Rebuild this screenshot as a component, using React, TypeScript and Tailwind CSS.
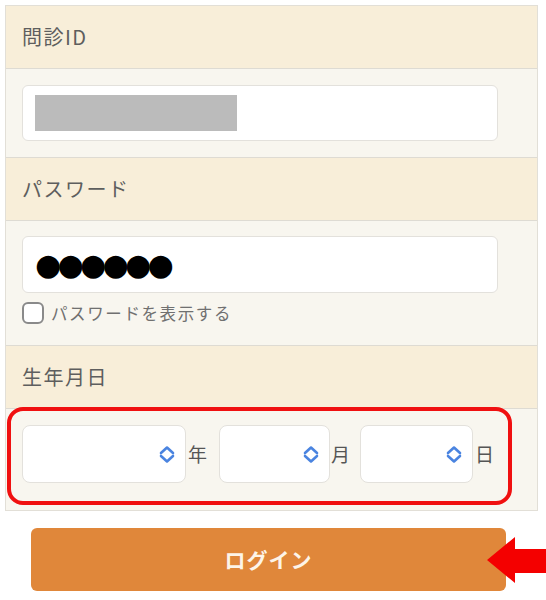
import React from "react";

const font = { fontFamily: '"Noto Sans CJK JP", "Noto Sans", sans-serif' };

function Chevrons() {
  return (
    <svg width="16" height="19" viewBox="0 0 16 19" fill="none">
      <path d="M2 8 L8 2.5 L14 8" stroke="#4a84e0" strokeWidth="2.6" strokeLinecap="round" strokeLinejoin="round" />
      <path d="M2 11 L8 16.5 L14 11" stroke="#4a84e0" strokeWidth="2.6" strokeLinecap="round" strokeLinejoin="round" />
    </svg>
  );
}

function Select({ w }: { w: string }) {
  return (
    <div className={`${w} h-[58px] bg-white border border-[#e3e1dc] rounded-[8px] flex items-center justify-end pr-[10px]`}>
      <Chevrons />
    </div>
  );
}

function Header({ children }: { children: React.ReactNode }) {
  return (
    <div className="h-[63px] bg-[#f8eed9] flex items-center pl-[16px] text-[20px] tracking-[1.5px] text-[#5e5e5e] border-b border-[#dedbd3]">
      {children}
    </div>
  );
}

export default function App() {
  return (
    <div className="relative w-[546px] h-[600px] bg-white overflow-hidden" style={font}>
      <div className="pt-[5px] pl-[5px]">
        <div className="relative w-[533px] border border-[#e2dfd7] bg-[#f8f6ef]">
          <Header>問診ID</Header>
          <div className="pt-[16px] pb-[16px] pl-[16px] border-b border-[#dedbd3]">
            <div className="w-[476px] h-[56px] bg-white border border-[#e3e1dc] rounded-[6px] flex items-center pl-[12px]">
              <div className="w-[202px] h-[36px] bg-[#bbbbbb]" />
            </div>
          </div>
          <Header>パスワード</Header>
          <div className="pt-[15px] pb-[21px] pl-[16px] border-b border-[#dedbd3]">
            <div className="w-[476px] h-[57px] bg-white border border-[#e3e1dc] rounded-[6px] flex items-center pl-[12px]">
              <span className="text-[30px] leading-none text-black tracking-[-3.7px]" style={{ fontFamily: '"DejaVu Sans", sans-serif' }}>
                ●●●●●●
              </span>
            </div>
            <div className="mt-[9px] flex items-center">
              <div className="w-[22px] h-[22px] rounded-[6px] border-2 border-[#8a8a8a] bg-white" />
              <span className="ml-[7px] text-[16.5px] tracking-[1.6px] text-[#707070] leading-none">パスワードを表示する</span>
            </div>
          </div>
          <Header>生年月日</Header>
          <div className="pt-[16px] pb-[27px] pl-[16px] flex items-center">
            <Select w="w-[164px]" />
            <span className="ml-[2px] w-[31px] text-[19px] text-[#555]">年</span>
            <Select w="w-[111px]" />
            <span className="ml-[1px] w-[29px] text-[19px] text-[#555]">月</span>
            <Select w="w-[113px]" />
            <span className="ml-[2px] text-[19px] text-[#555]">日</span>
          </div>
          <div className="absolute left-[1px] top-[401px] w-[505px] h-[98px] border-[4px] border-[#f01010] rounded-[16px]" />
        </div>
        <div className="mt-[17px] ml-[26px] w-[475px] h-[63px] bg-[#e0873a] rounded-[6px] flex items-center justify-center">
          <span className="text-[21px] font-bold tracking-[1px] text-[#fdf4e8]">ログイン</span>
        </div>
      </div>
      <svg className="absolute left-0 top-0" width="546" height="600" viewBox="0 0 546 600">
        <polygon points="487,560 515,537 515,549 546,549 546,573 515,573 515,583" fill="#f40000" />
      </svg>
    </div>
  );
}
